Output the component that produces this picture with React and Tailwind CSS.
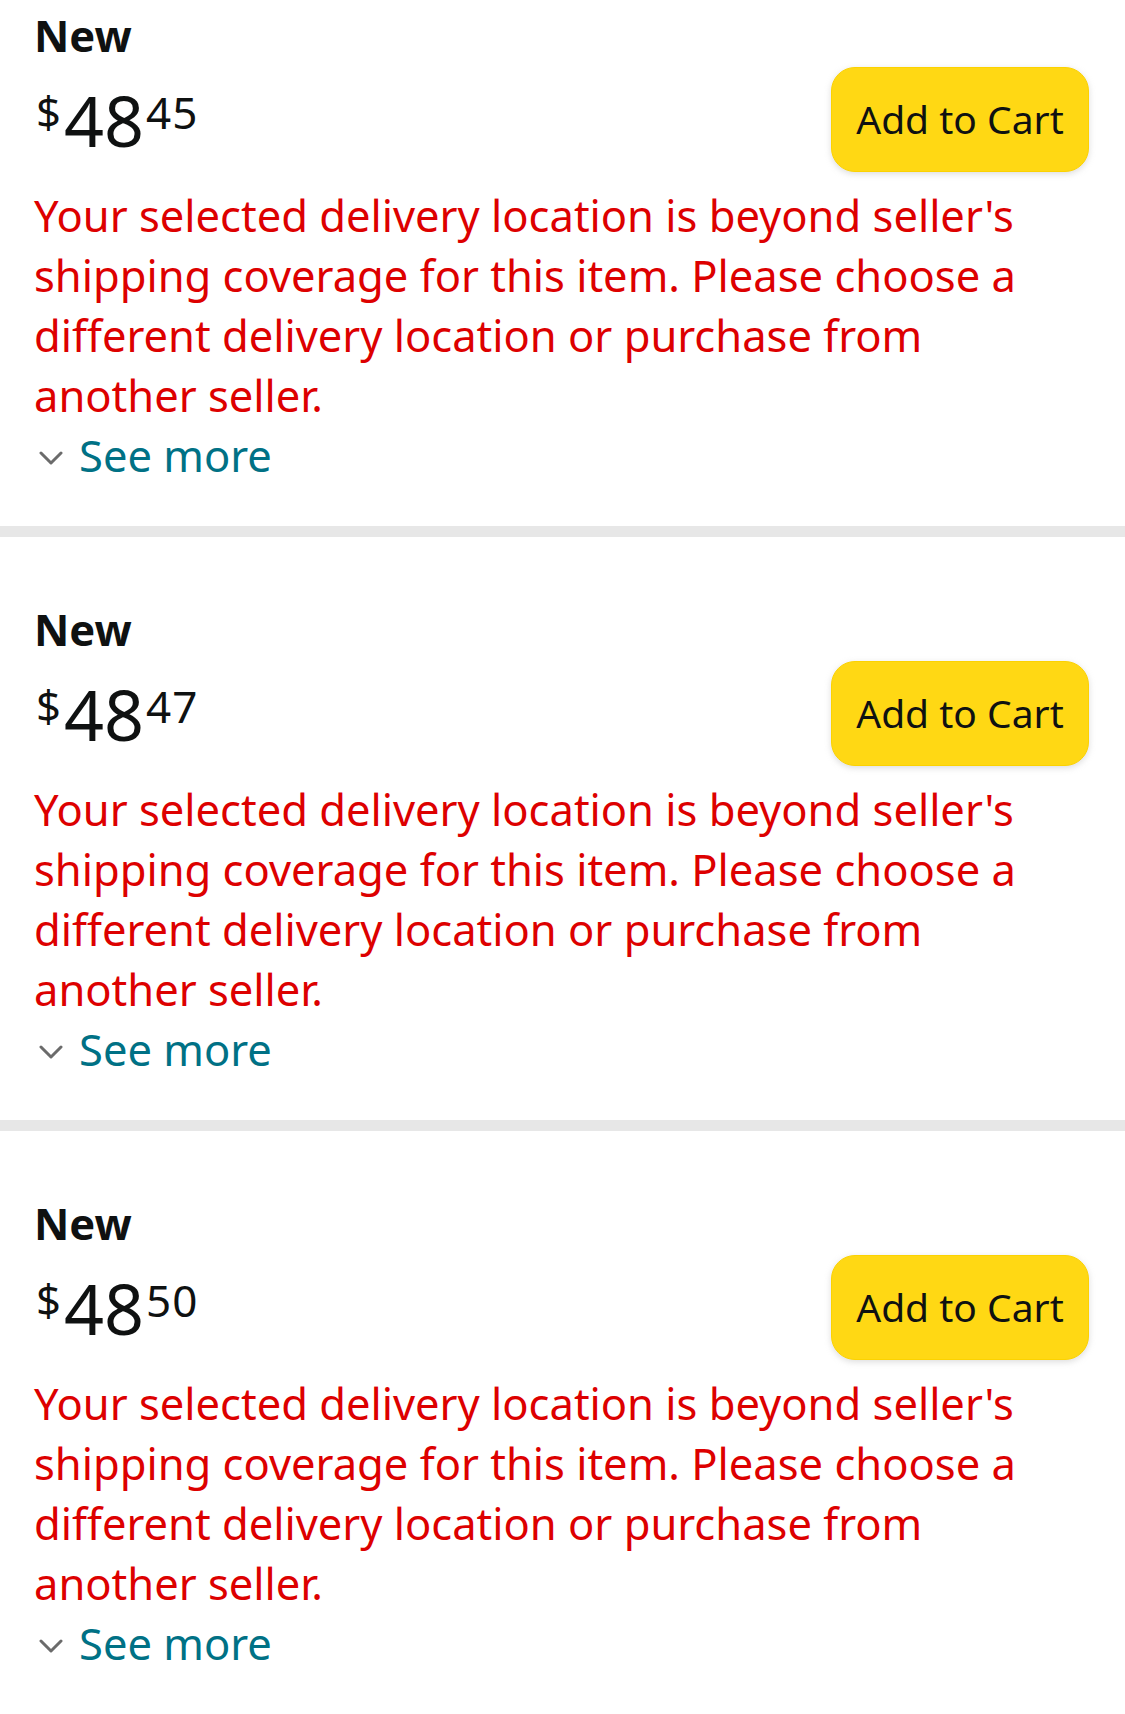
const offers = [
  { whole: '48', frac: '45' },
  { whole: '48', frac: '47' },
  { whole: '48', frac: '50' },
];

function Offer({ whole, frac, first }) {
  return (
    <div className={`${first ? 'pt-[9px]' : 'pt-[66px]'} pb-[41px] pl-[34px] pr-[36px]`}>
      <div className="flex items-start justify-between">
        <div className="flex flex-col">
          <div className="text-[43.5px] leading-[52px] font-bold text-[#0f1111]">New</div>
          <div className="mt-[24px] flex items-start text-[#0f1111]">
            <span className="ml-[2px] mt-[5px] text-[43.5px] leading-none">$</span>
            <span className="ml-[3px] text-[70px] leading-none">{whole}</span>
            <span className="ml-[2px] mt-[5px] text-[44px] leading-none tracking-[1px]">{frac}</span>
          </div>
        </div>
        <button className="mt-[58px] flex h-[105px] w-[258px] items-center justify-center rounded-[24px] border border-[#fcd200] bg-[#ffd814] text-[39px] text-[#0f1111] shadow-[0_2px_6px_rgba(180,180,180,0.45)]">
          Add to Cart
        </button>
      </div>
      <p className="mt-[13px] text-[43.5px] leading-[60px] text-[#dd0000]">
        Your selected delivery location is beyond seller's shipping coverage for this item. Please choose a different delivery location or purchase from another seller.
      </p>
      <div className="flex items-start">
        <svg className="ml-[5px] mt-[26px]" width="24" height="14" viewBox="0 0 24 14" fill="none">
          <path d="M2 2 L12 12 L22 2" stroke="#6b6b6b" strokeWidth="3" strokeLinecap="round" strokeLinejoin="round" />
        </svg>
        <span className="ml-[16px] text-[43.5px] leading-[60px] text-[#007185]">See more</span>
      </div>
    </div>
  );
}

export default function App() {
  return (
    <div className="min-h-[1714px] bg-white" style={{ fontFamily: '"Noto Sans", sans-serif' }}>
      {offers.map((o, i) => (
        <div key={i}>
          <Offer {...o} first={i === 0} />
          {i < offers.length - 1 && <div className="h-[11px] bg-[#e7e7e7]" />}
        </div>
      ))}
    </div>
  );
}
